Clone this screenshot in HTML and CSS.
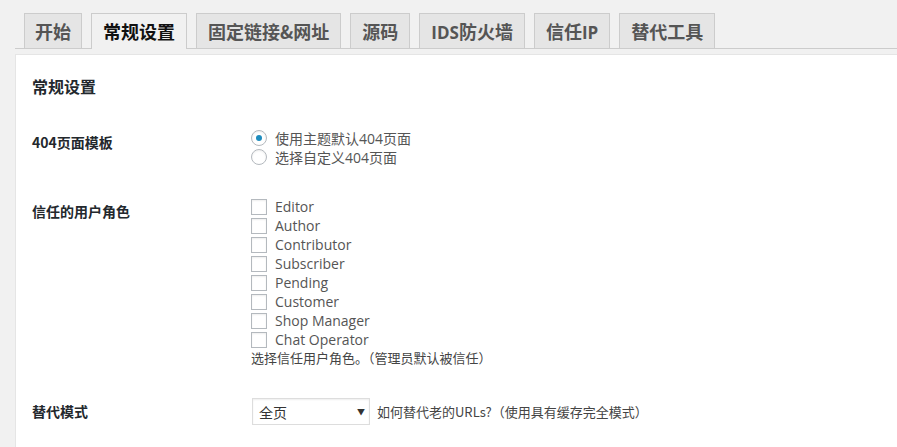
FILE: index.html
```html
<!DOCTYPE html>
<html lang="zh-CN">
<head>
<meta charset="utf-8">
<title>常规设置</title>
<link rel="stylesheet" href="styles.css">
</head>
<body>
<div class="wrap">
  <nav class="tabs">
    <a class="tab first">开始</a>
    <a class="tab active">常规设置</a>
    <a class="tab">固定链接&amp;网址</a>
    <a class="tab">源码</a>
    <a class="tab"><span class="lat">IDS</span>防火墙</a>
    <a class="tab">信任<span class="lat">IP</span></a>
    <a class="tab">替代工具</a>
  </nav>
  <section class="panel">
    <h2 class="title">常规设置</h2>
    <div class="row row-404">
      <div class="label">404页面模板</div>
      <div class="field">
        <label class="opt"><span class="radio checked"></span>使用主题默认404页面</label>
        <label class="opt"><span class="radio"></span>选择自定义404页面</label>
      </div>
    </div>
    <div class="row row-roles">
      <div class="label">信任的用户角色</div>
      <div class="field">
        <label class="opt"><span class="check"></span>Editor</label>
        <label class="opt"><span class="check"></span>Author</label>
        <label class="opt"><span class="check"></span>Contributor</label>
        <label class="opt"><span class="check"></span>Subscriber</label>
        <label class="opt"><span class="check"></span>Pending</label>
        <label class="opt"><span class="check"></span>Customer</label>
        <label class="opt"><span class="check"></span>Shop Manager</label>
        <label class="opt"><span class="check"></span>Chat Operator</label>
        <p class="desc">选择信任用户角色。（管理员默认被信任）</p>
      </div>
    </div>
    <div class="row row-mode">
      <div class="label">替代模式</div>
      <div class="field inline">
        <div class="select"><span>全页</span><span class="arrow">▼</span></div>
        <span class="desc2">如何替代老的URLs?（使用具有缓存完全模式）</span>
      </div>
    </div>
  </section>
</div>
</body>
</html>
```
FILE: styles.css
```css
html, body {
  margin: 0;
  padding: 0;
  background: #f1f1f1;
  overflow: hidden;
}
body {
  font-family: "Open Sans", "Noto Sans CJK SC", sans-serif;
  color: #444;
  width: 897px;
  height: 447px;
}
.wrap {
  padding-left: 15px;
}
.tabs {
  display: flex;
  padding-top: 13px;
  border-bottom: 1px solid #ccc;
  height: 35px;
}
.tab {
  display: block;
  box-sizing: border-box;
  height: 35px;
  margin-left: 9px;
  padding: 0 11px;
  border: 1px solid #ccc;
  border-bottom: none;
  background: #e5e5e5;
  color: #555;
  font-family: "Noto Sans CJK SC", serif;
  font-weight: 700;
  font-size: 18px;
  line-height: 34px;
  white-space: nowrap;
}
.tab.first {
  padding: 0 10px;
}
.tab .lat {
  font-family: "Open Sans", sans-serif;
  font-size: 17px;
}
.tab.active {
  background: #f1f1f1;
  color: #111;
  height: 36px;
  margin-bottom: -1px;
}
.panel {
  margin-top: 5px;
  margin-right: -20px;
  background: #fff;
  border-left: 1px solid #e5e5e5;
  border-top: 1px solid #e5e5e5;
  padding: 0 16px;
  height: 400px;
}
.title {
  margin: 19px 0 0;
  font-family: "Noto Sans CJK SC", sans-serif;
  font-size: 16px;
  line-height: 24px;
  font-weight: 700;
  color: #23282d;
}
.row {
  display: grid;
  grid-template-columns: 219px 1fr;
}
.label {
  font-family: "Noto Sans CJK SC", sans-serif;
  font-size: 14px;
  font-weight: 700;
  color: #23282d;
  line-height: 19px;
  padding-top: 5px;
}
.row-404 { margin-top: 30px; }
.row-roles { margin-top: 31px; }
.row-mode { margin-top: 31px; align-items: center; }
.row-mode .label { padding-top: 0; }
.field {
  display: flex;
  flex-direction: column;
}
.opt {
  display: flex;
  align-items: center;
  height: 19px;
  font-size: 14px;
  color: #555;
  font-family: "Open Sans", "Noto Sans CJK SC", sans-serif;
}
.radio, .check {
  box-sizing: border-box;
  width: 16px;
  height: 16px;
  margin-right: 8px;
  border: 1px solid #b4b9be;
  background: #fff;
  box-shadow: inset 0 1px 2px rgba(0,0,0,.07);
  flex: none;
}
.radio {
  border-radius: 50%;
  display: flex;
  align-items: center;
  justify-content: center;
}
.radio.checked::after {
  content: "";
  width: 6px;
  height: 6px;
  border-radius: 50%;
  background: #1e8cbe;
}
.desc {
  margin: 0;
  font-size: 13px;
  line-height: 18px;
  color: #444;
  font-family: "Noto Sans CJK SC", sans-serif;
}
.inline {
  flex-direction: row;
  align-items: center;
}
.select {
  box-sizing: border-box;
  width: 118px;
  height: 27px;
  margin-left: 1px;
  border: 1px solid #ddd;
  box-shadow: inset 0 1px 2px rgba(0,0,0,.07);
  display: flex;
  align-items: center;
  justify-content: space-between;
  padding: 0 4px 0 6px;
  font-family: "Noto Sans CJK SC", sans-serif;
  font-size: 14px;
  color: #333;
}
.arrow {
  font-size: 8px;
  color: #333;
}
.desc2 {
  margin-left: 7px;
  font-family: "Noto Sans CJK SC", sans-serif;
  font-size: 13px;
  color: #444;
}
```
